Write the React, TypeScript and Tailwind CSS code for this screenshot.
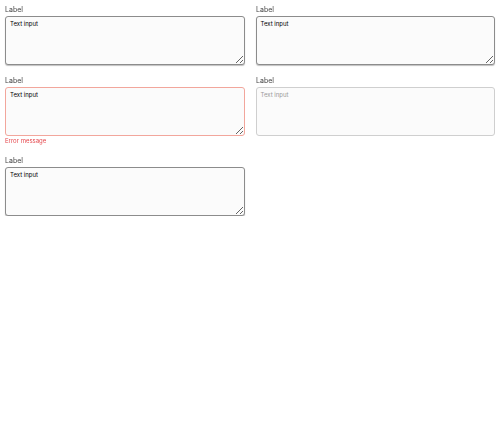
import React from "react";

const font = { fontFamily: "Inter, 'Liberation Sans', sans-serif" };

const Field = ({ state, placeholder }: { state?: "error" | "disabled"; placeholder?: boolean }) => {
    const border =
        state === "error"
            ? "border-[#f2a69c]"
            : state === "disabled"
            ? "border-[#cfcfcf] resize-none"
            : "border-[#8c8c8c] shadow-[0_1px_1px_rgba(0,0,0,0.25)]";

    return <div className="flex flex-col">
        <label className="text-[7px] leading-[9px] text-[#444444] mb-[2px] will-change-transform">Label</label>
        <textarea
            className={`h-[49px] w-full rounded-[3px] border bg-[#fbfbfb] px-[4px] py-[3px] text-[6px] leading-[8px] text-black outline-none placeholder:text-[#9a9a9a] ${border}`}
            defaultValue={placeholder ? undefined : "Text input"}
            placeholder={placeholder ? "Text input" : undefined}
            disabled={state === "disabled"}
            style={font}
        />
        {state === "error" ? <span className="mt-[1px] text-[6px] leading-[8px] text-[#e5484d] will-change-transform">Error message</span> : null}
    </div>
}

export default function App() {
    return <div className="grid grid-cols-2 gap-x-[11px] gap-y-[11px] px-[5px] pt-[5px] items-start antialiased" style={font}>
        <Field />
        <Field />
        <Field state="error" />
        <Field state="disabled" placeholder />
        <Field />
    </div>
}
